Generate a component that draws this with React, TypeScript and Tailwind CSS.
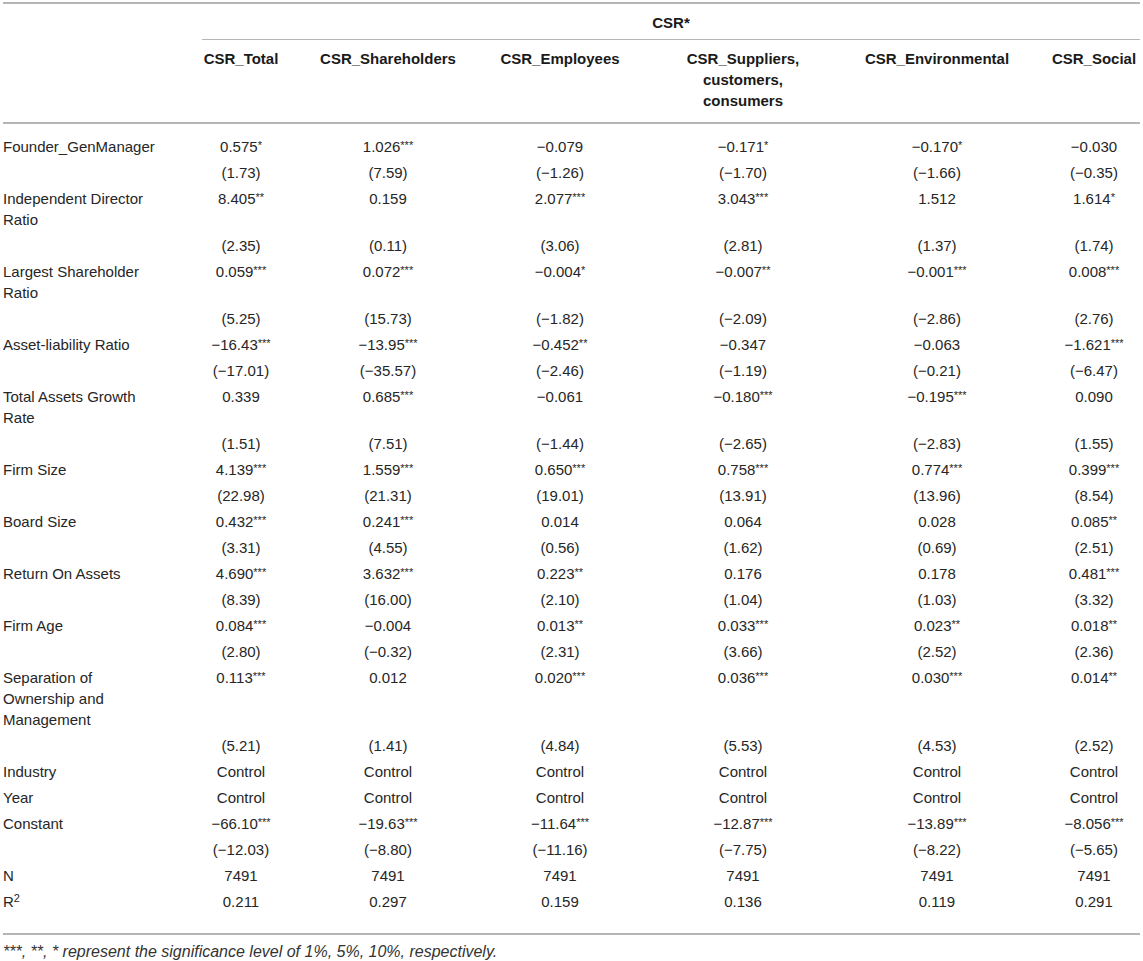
import React from "react";

// Regression table: CSR sub-indices on governance variables
interface Row {
    label: string[];
    values: string[];
}

const M = "\u2212";

const rows: Row[] = [
    { label: ["Founder_GenManager"], values: ["0.575*", "1.026***", `${M}0.079`, `${M}0.171*`, `${M}0.170*`, `${M}0.030`] },
    { label: [], values: ["(1.73)", "(7.59)", `(${M}1.26)`, `(${M}1.70)`, `(${M}1.66)`, `(${M}0.35)`] },
    { label: ["Independent Director", "Ratio"], values: ["8.405**", "0.159", "2.077***", "3.043***", "1.512", "1.614*"] },
    { label: [], values: ["(2.35)", "(0.11)", "(3.06)", "(2.81)", "(1.37)", "(1.74)"] },
    { label: ["Largest Shareholder", "Ratio"], values: ["0.059***", "0.072***", `${M}0.004*`, `${M}0.007**`, `${M}0.001***`, "0.008***"] },
    { label: [], values: ["(5.25)", "(15.73)", `(${M}1.82)`, `(${M}2.09)`, `(${M}2.86)`, "(2.76)"] },
    { label: ["Asset-liability Ratio"], values: [`${M}16.43***`, `${M}13.95***`, `${M}0.452**`, `${M}0.347`, `${M}0.063`, `${M}1.621***`] },
    { label: [], values: [`(${M}17.01)`, `(${M}35.57)`, `(${M}2.46)`, `(${M}1.19)`, `(${M}0.21)`, `(${M}6.47)`] },
    { label: ["Total Assets Growth", "Rate"], values: ["0.339", "0.685***", `${M}0.061`, `${M}0.180***`, `${M}0.195***`, "0.090"] },
    { label: [], values: ["(1.51)", "(7.51)", `(${M}1.44)`, `(${M}2.65)`, `(${M}2.83)`, "(1.55)"] },
    { label: ["Firm Size"], values: ["4.139***", "1.559***", "0.650***", "0.758***", "0.774***", "0.399***"] },
    { label: [], values: ["(22.98)", "(21.31)", "(19.01)", "(13.91)", "(13.96)", "(8.54)"] },
    { label: ["Board Size"], values: ["0.432***", "0.241***", "0.014", "0.064", "0.028", "0.085**"] },
    { label: [], values: ["(3.31)", "(4.55)", "(0.56)", "(1.62)", "(0.69)", "(2.51)"] },
    { label: ["Return On Assets"], values: ["4.690***", "3.632***", "0.223**", "0.176", "0.178", "0.481***"] },
    { label: [], values: ["(8.39)", "(16.00)", "(2.10)", "(1.04)", "(1.03)", "(3.32)"] },
    { label: ["Firm Age"], values: ["0.084***", `${M}0.004`, "0.013**", "0.033***", "0.023**", "0.018**"] },
    { label: [], values: ["(2.80)", `(${M}0.32)`, "(2.31)", "(3.66)", "(2.52)", "(2.36)"] },
    { label: ["Separation of", "Ownership and", "Management"], values: ["0.113***", "0.012", "0.020***", "0.036***", "0.030***", "0.014**"] },
    { label: [], values: ["(5.21)", "(1.41)", "(4.84)", "(5.53)", "(4.53)", "(2.52)"] },
    { label: ["Industry"], values: ["Control", "Control", "Control", "Control", "Control", "Control"] },
    { label: ["Year"], values: ["Control", "Control", "Control", "Control", "Control", "Control"] },
    { label: ["Constant"], values: [`${M}66.10***`, `${M}19.63***`, `${M}11.64***`, `${M}12.87***`, `${M}13.89***`, `${M}8.056***`] },
    { label: [], values: [`(${M}12.03)`, `(${M}8.80)`, `(${M}11.16)`, `(${M}7.75)`, `(${M}8.22)`, `(${M}5.65)`] },
    { label: ["N"], values: ["7491", "7491", "7491", "7491", "7491", "7491"] },
    { label: ["R2"], values: ["0.211", "0.297", "0.159", "0.136", "0.119", "0.291"] },
];

const grid = "grid grid-cols-[163px_78px_144px_128px_166px_150px_92px] gap-x-[36px]";

function Value({ text }: { text: string }) {
    const m = text.match(/^(.*?)(\*+)$/);
    if (!m) return <>{text}</>;
    return (
        <>
            {m[1]}
            <span className="relative -top-[3px] text-[11px] leading-none">{m[2]}</span>
        </>
    );
}

function Label({ lines }: { lines: string[] }) {
    if (lines.length === 1 && lines[0] === "R2") {
        return (
            <>
                R<span className="relative -top-[5px] text-[11px] leading-none">2</span>
            </>
        );
    }
    return (
        <>
            {lines.map((l, i) => (
                <div key={i}>{l}</div>
            ))}
        </>
    );
}

export default function App() {
    return (
        <div
            className="min-h-[961px] bg-white text-[15px] leading-[21px] text-[#262626]"
            style={{ fontFamily: '"Liberation Sans", Arial, sans-serif' }}
        >
            <div className="mx-[3px] mt-[2px] w-[1137px]">
                {/* Cabecera */}
                <div className="border-t-2 border-[#b5b5b5]">
                    <div className={grid}>
                        <div />
                        <div className="col-span-6 border-b border-[#b5b5b5] pt-[8px] pb-[6px] text-center font-bold text-[#1a1a1a]">
                            CSR*
                        </div>
                    </div>
                    <div className={`${grid} border-b-2 border-[#b5b5b5] pt-[8px] pb-[11px] text-center font-bold text-[#1a1a1a]`}>
                        <div />
                        <div>CSR_Total</div>
                        <div>CSR_Shareholders</div>
                        <div>CSR_Employees</div>
                        <div>
                            CSR_Suppliers,
                            <br />
                            customers,
                            <br />
                            consumers
                        </div>
                        <div>CSR_Environmental</div>
                        <div>CSR_Social</div>
                    </div>
                </div>

                {/* Cuerpo */}
                <div className="border-b-2 border-[#b5b5b5] pt-[9px] pb-[19px]">
                    {rows.map((row, idx) => (
                        <div key={idx} className={`${grid} py-[2.5px]`}>
                            <div className="whitespace-nowrap">
                                <Label lines={row.label} />
                            </div>
                            {row.values.map((v, j) => (
                                <div key={j} className="whitespace-nowrap text-center">
                                    <Value text={v} />
                                </div>
                            ))}
                        </div>
                    ))}
                </div>

                {/* Nota */}
                <p className="pt-[6px] text-[16px] italic text-[#333]">
                    ***, **, * represent the significance level of 1%, 5%, 10%, respectively.
                </p>
            </div>
        </div>
    );
}
